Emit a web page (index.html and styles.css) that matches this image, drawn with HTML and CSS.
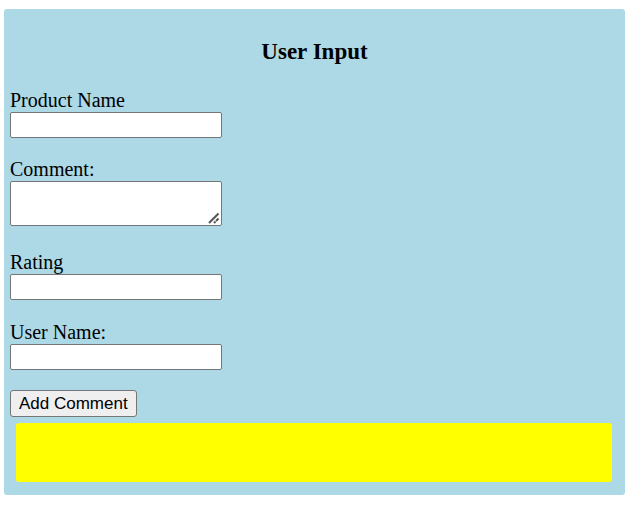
FILE: index.html
```
<!DOCTYPE html>
<html lang="en">
<head>
<meta charset="utf-8">
<title>User Input</title>
<link rel="stylesheet" href="styles.css">
</head>
<body>
<main class="card">
  <h3 class="title">User Input</h3>
  <form class="form">
    <div class="field">
      <label for="product">Product Name</label>
      <input class="control" type="text" id="product">
    </div>
    <div class="field field-comment">
      <label for="comment">Comment:</label>
      <textarea class="control comment" id="comment"></textarea>
      <svg class="grip" viewBox="0 0 12 12" aria-hidden="true">
        <path d="M1 11 10.500 1.500M6 11 7.500 9.500M8 9 10.500 6.500"/>
      </svg>
    </div>
    <div class="field">
      <label for="rating">Rating</label>
      <input class="control" type="text" id="rating">
    </div>
    <div class="field">
      <label for="user">User Name:</label>
      <input class="control" type="text" id="user">
    </div>
    <button class="submit" type="button">Add Comment</button>
  </form>
  <div class="comments"></div>
</main>
</body>
</html>
```
FILE: styles.css
```
* {
  box-sizing: border-box;
}

body {
  margin: 9px 3px 9px 4px;
  background: #fff;
  color: #000;
  font: 20px/24px "Liberation Serif", "Times New Roman", serif;
}

.card {
  padding: 6px;
  border-radius: 3px;
  background: lightblue;
}

.title {
  margin: 24px 0 23px;
  font-size: 23px;
  line-height: 26px;
  text-align: center;
}

.form {
  display: flex;
  flex-direction: column;
  align-items: flex-start;
}

.field {
  position: relative;
  display: flex;
  flex-direction: column;
  margin-bottom: 20px;
}

.field:first-child {
  margin-bottom: 19px;
}

.field-comment {
  margin-bottom: 24px;
}

.control {
  width: 212px;
  height: 26px;
  padding: 2px;
  border: 1px solid #767676;
  border-radius: 2px;
  background: #fff;
  font: 17px "Liberation Sans", Arial, sans-serif;
}

.comment {
  height: 45px;
  resize: both;
}

.comment::-webkit-resizer {
  background: transparent;
}

.grip {
  position: absolute;
  right: 2px;
  bottom: 2px;
  width: 12px;
  height: 12px;
  fill: none;
  stroke: #555;
  stroke-width: 2;
  pointer-events: none;
}

.submit {
  height: 27px;
  padding: 0 8px;
  border: 1px solid #767676;
  border-radius: 3px;
  background: #efefef;
  color: #000;
  font: 17px "Liberation Sans", Arial, sans-serif;
}

.comments {
  min-height: 59px;
  margin: 6px 7px 7px 6px;
  border-radius: 3px;
  background: yellow;
}
```
